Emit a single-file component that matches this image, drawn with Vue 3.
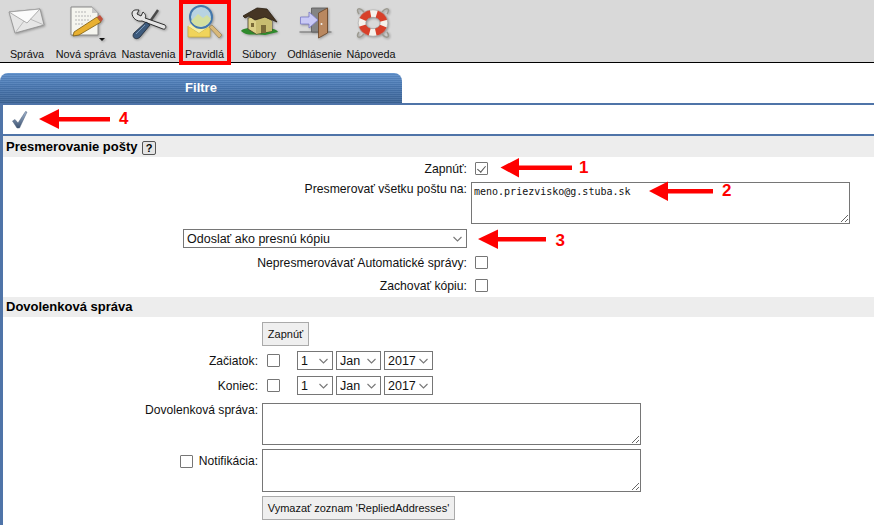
<script setup>
const tools = [
  { label: 'Správa', w: 54 },
  { label: 'Nová správa', w: 64 },
  { label: 'Nastavenia', w: 61 },
  { label: 'Pravidlá', w: 51 },
  { label: 'Súbory', w: 58 },
  { label: 'Odhlásenie', w: 53 },
  { label: 'Nápoveda', w: 60 },
]
</script>

<template>
  <div class="page">
    <div class="toolbar">
      <div v-for="(t, i) in tools" :key="t.label" class="tool" :style="{ width: t.w + 'px' }">
        <svg class="ic" viewBox="0 0 44 44" width="44" height="44">
          <g v-if="i === 0">
            <path d="M4 12 L35 9 L39 25 L10 33 Z" fill="#e6e6e6" stroke="#8c8c8c" stroke-width=".8"/>
            <path d="M4 12 L22 23 L35 9 Z" fill="#fbfbfb" stroke="#9a9a9a" stroke-width=".8"/>
            <path d="M10 33 L19 21 M39 25 L25 19" stroke="#b0b0b0" stroke-width=".8" fill="none"/>
          </g>
          <g v-else-if="i === 1">
            <path d="M7 7 H28 L34 13 V35 H7 Z" fill="#f5f5ef" stroke="#8a8a8a"/>
            <path d="M28 7 V13 H34 Z" fill="#c9c9c9"/>
            <path d="M11 12 H23 M11 16 H27 M11 20 H25 M11 24 H19" stroke="#b5b5b5" stroke-dasharray="2 1"/>
            <path d="M10 32 L33 17 L37 22 L15 35 L9 36 Z" fill="#e8b030" stroke="#7a5a10" stroke-width=".8"/>
            <path d="M33 17 L37 22 L39 19 L36 15 Z" fill="#c0503c"/>
            <path d="M35 38 H41 L38 41 Z" fill="#111"/>
          </g>
          <g v-else-if="i === 2">
            <path d="M22 23 L31 10" stroke="#4a4a4a" stroke-width="2.400"/>
            <path d="M5 13 C6 9 10 10 12 10 L10 14 L14 16 L16 12 C19 14 19 17 18 18 L38 25 C40 27 38 30 36 29 L15 21 C10 22 5 18 5 13 Z" fill="#e4e4e4" stroke="#2e2e2e" stroke-width="1"/>
            <path d="M7 33 L19 22 L23 25 L13 37 C9 41 4 37 7 33 Z" fill="#3d5a7c" stroke="#1c2634" stroke-width=".8"/>
            <path d="M9 34 L18 25" stroke="#7a98b8" stroke-width="1"/>
          </g>
          <g v-else-if="i === 3">
            <path d="M5 26 L16 33 L27 26 V37 H5 Z" fill="#f0d45a" stroke="#c8ac40" stroke-width=".8"/>
            <path d="M5 26 L16 19 L27 26 L16 33 Z" fill="#f7f0a0"/>
            <circle cx="18" cy="17" r="11" fill="#bcdcec" fill-opacity=".85" stroke="#4478ac" stroke-width="2"/>
            <path d="M8 21 L15 14 L20 18 L24 15 L28 19 A11 11 0 0 1 8 21 Z" fill="#d4e0a0"/>
            <path d="M26 27 L29 25 L39 35 L36 38 Z" fill="#d9b878" stroke="#9a8860" stroke-width=".8"/>
          </g>
          <g v-else-if="i === 4">
            <path d="M4 31 C7 26 38 26 41 32 L28 35 C20 33 10 37 4 31 Z" fill="#2f8a2c"/>
            <path d="M11 18 L24 15 L35 21 V31 L19 34 L11 29 Z" fill="#dcd088" stroke="#4a4028" stroke-width=".8"/>
            <path d="M19 20 L19 34 L35 31 V21 L24 15 Z" fill="#c8bc70"/>
            <path d="M6 16 L20 8 L30 9 L40 22 L28 17 L18 20 L12 16 L8 18 Z" fill="#463624" stroke="#281e12" stroke-width=".8"/>
            <rect x="24" y="25" width="5" height="8" fill="#7a6a38"/>
            <rect x="14" y="23" width="3" height="4" fill="#7a6a38"/>
          </g>
          <g v-else-if="i === 5">
            <path d="M6.500 32 H38.500" stroke="#666"/>
            <path d="M18.500 8 H34.500 V32 H18.500 Z" fill="#848484" stroke="#5a5a5a" stroke-width=".8"/>
            <path d="M25.500 13 L34.500 8 V33 L25.500 38 Z" fill="#b98860" stroke="#6a4426" stroke-width=".8"/>
            <circle cx="28.500" cy="24" r="1" fill="#f0f0f0"/>
            <path d="M7.500 17 H16 V12 L25 20 L16 28 V24 H7.500 Z" fill="#c9c9f5" stroke="#7a7ac8" stroke-width=".8"/>
          </g>
          <g v-else>
            <path d="M10 14 C6 8 11 7 15 12 M38 14 C42 8 37 7 33 12 M10 32 C6 38 11 39 15 34 M38 32 C42 38 37 39 33 34" stroke="#9c9a90" stroke-width="1.500" fill="none"/>
            <ellipse cx="24" cy="23" rx="11" ry="9.500" fill="none" stroke="#f5f2ec" stroke-width="7.500"/>
            <ellipse cx="24" cy="23" rx="11" ry="9.500" fill="none" stroke="#d8402a" stroke-width="7.500" stroke-dasharray="10 6.200" stroke-dashoffset="-3.200"/>
            <ellipse cx="24" cy="23" rx="14.800" ry="13.200" fill="none" stroke="#9a9a9a" stroke-width=".5"/>
            <ellipse cx="24" cy="23" rx="7.200" ry="5.700" fill="none" stroke="#888" stroke-width=".5"/>
          </g>
        </svg>
        <span class="lbl">{{ t.label }}</span>
      </div>
      <div class="marker"></div>
    </div>

    <div class="tabs"><div class="tab">Filtre</div></div>

    <div class="panel">
      <div class="savebar">
        <svg class="check" viewBox="0 0 16 18" width="16" height="18">
          <defs>
            <linearGradient id="chk" x1="0" y1="0" x2="0" y2="1">
              <stop offset="0" stop-color="#a4b8d2" />
              <stop offset="1" stop-color="#3c5270" />
            </linearGradient>
          </defs>
          <path d="M.5 10 L3 8.500 L6 12 L13.500 .5 L15 1 L7.500 17 L5 17 Z" fill="url(#chk)" stroke="#4a5e7a" stroke-width=".5"/>
        </svg>
      </div>

      <div class="sec">Presmerovanie pošty <span class="help">?</span></div>

      <div class="row r1">
        <label class="lab">Zapnúť:</label>
        <input type="checkbox" checked class="cb" />
      </div>
      <div class="row r2">
        <label class="lab">Presmerovať všetku poštu na:</label>
        <textarea class="ta mono" spellcheck="false">meno.priezvisko@g.stuba.sk</textarea>
      </div>
      <div class="row r3">
        <select class="wide"><option>Odoslať ako presnú kópiu</option></select>
      </div>
      <div class="row r1">
        <label class="lab">Nepresmerovávať Automatické správy:</label>
        <input type="checkbox" class="cb" />
      </div>
      <div class="row r1">
        <label class="lab">Zachovať kópiu:</label>
        <input type="checkbox" class="cb" />
      </div>

      <div class="sec sec2">Dovolenková správa</div>

      <div class="vac">
        <div class="f-row first">
          <button class="btn b-on">Zapnúť</button>
        </div>
        <div class="d-row">
          <span class="v-lab">Začiatok:</span>
          <span class="chk-cell"><input type="checkbox" class="cb" /></span>
          <div class="dates">
            <select class="d"><option>1</option></select>
            <select class="m"><option>Jan</option></select>
            <select class="y"><option>2017</option></select>
          </div>
        </div>
        <div class="d-row second">
          <span class="v-lab">Koniec:</span>
          <span class="chk-cell"><input type="checkbox" class="cb" /></span>
          <div class="dates">
            <select class="d"><option>1</option></select>
            <select class="m"><option>Jan</option></select>
            <select class="y"><option>2017</option></select>
          </div>
        </div>
        <div class="t-row one">
          <span class="v-lab">Dovolenková správa:</span>
          <textarea class="ta2"></textarea>
        </div>
        <div class="t-row two">
          <span class="v-lab"><input type="checkbox" class="cb n-cb" />Notifikácia:</span>
          <textarea class="ta2 tall"></textarea>
        </div>
        <div class="f-row">
          <button class="btn b-clr">Vymazať zoznam 'RepliedAddresses'</button>
        </div>
      </div>
    </div>

    <!-- annotations drawn over the screenshot -->
    <svg class="ann" width="874" height="525" viewBox="0 0 874 525">
      <g fill="#f00">
        <path d="M39 119 L59 109 V117 H110 V121.500 H59 V129 Z"/>
        <path d="M500.500 167.500 L519 158 V165.500 L572 165.500 V170 L519 170 V177.500 Z"/>
        <path d="M649 191 L668 181.500 V189 L713 189 V193.500 L668 193.500 V201 Z"/>
        <path d="M478 239 L498 229.500 V237 L546 237 V241.500 L498 241.500 V249 Z"/>
      </g>
      <g fill="#f00" font-family="Liberation Sans, sans-serif" font-size="17" font-weight="700">
        <text x="119" y="124">4</text>
        <text x="579" y="173">1</text>
        <text x="722" y="196">2</text>
        <text x="555.500" y="245.500">3</text>
      </g>
    </svg>
  </div>
</template>

<style>
html, body { margin: 0; background: #fff; }
</style>

<style scoped>
.page {
  position: relative;
  width: 874px;
  height: 525px;
  overflow: hidden;
  background: #fff;
  font-family: "Liberation Sans", Arial, sans-serif;
  font-size: 12px;
  color: #111;
}
.toolbar {
  position: relative;
  display: flex;
  height: 62px;
  background: #d9d9d9;
  border-bottom: 1px solid #000;
}
.tool {
  position: relative;
  display: flex;
  flex-direction: column;
  align-items: center;
  height: 62px;
  flex: none;
}
.ic { filter: drop-shadow(1px 1px 1px rgba(0, 0, 0, .3)); }
.lbl {
  position: absolute;
  top: 48px;
  white-space: nowrap;
  font-size: 10.8px;
  line-height: 13px;
  left: 50%;
  transform: translateX(-50%);
}
.marker {
  position: absolute;
  left: 179px;
  top: 0;
  width: 52px;
  height: 65px;
  box-sizing: border-box;
  border: 4px solid #f00;
}
.tabs {
  height: 30px;
  padding-top: 10px;
}
.tab {
  width: 402px;
  height: 30px;
  box-sizing: border-box;
  border-radius: 8px 8px 0 0;
  background:
    repeating-linear-gradient(180deg, rgba(255, 255, 255, .07) 0 1px, rgba(0, 0, 0, .05) 1px 2px),
    linear-gradient(180deg, #5e90cc 0%, #4a78b2 45%, #3c6496 100%);
  color: #fff;
  font-weight: 700;
  font-size: 13px;
  line-height: 30px;
  text-align: center;
}
.panel {
  border-left: 3px solid #4f74a8;
  border-top: 2px solid #4f74a8;
  height: 422px;
  box-sizing: border-box;
}
.savebar {
  height: 29px;
  display: flex;
  align-items: center;
  padding-left: 9px;
  border-bottom: 2px solid #4f74a8;
}
.sec {
  height: 21px;
  line-height: 21px;
  background: #ededed;
  font-weight: 700;
  font-size: 13px;
  padding-left: 3px;
  color: #000;
}
.sec2 { height: 20px; line-height: 20px; }
.help {
  display: inline-block;
  width: 14px;
  height: 14px;
  box-sizing: border-box;
  border: 1px solid #555;
  border-radius: 2px;
  background: #e4e4e4;
  font-size: 11px;
  line-height: 12px;
  text-align: center;
  vertical-align: -1px;
  margin-left: 1px;
}
.row { display: flex; }
.lab {
  width: 464px;
  text-align: right;
  font-size: 12.2px;
  line-height: 14px;
  flex: none;
}
.r1 { height: 23px; align-items: center; }
.r1 .cb { margin: 0 0 0 8px; }
.r2 { height: 47px; margin-top: 2px; }
.cb {
  appearance: none;
  display: block;
  width: 13px;
  height: 13px;
  box-sizing: border-box;
  border: 1px solid #767676;
  border-radius: 1px;
  background: #fff;
  position: relative;
  margin: 0;
}
.cb:checked::after {
  content: "";
  position: absolute;
  left: 3px;
  top: 1px;
  width: 4px;
  height: 7px;
  border: solid #555;
  border-width: 0 1px 1px 0;
  transform: rotate(40deg);
}
.ta {
  display: block;
  margin: 0 0 0 4px;
  width: 379px;
  height: 42px;
  box-sizing: border-box;
  border: 1px solid #767676;
  padding: 3px 2px;
  resize: both;
  font-family: "DejaVu Sans Mono", monospace;
  font-size: 10px;
  line-height: 12px;
  color: #111;
  outline: none;
}
.r3 { height: 22px; align-items: flex-start; }
select {
  appearance: none;
  box-sizing: border-box;
  background-color: #fff;
  border: 1px solid #767676;
  border-radius: 0;
  font-family: "Liberation Sans", Arial, sans-serif;
  font-size: 12.5px;
  color: #111;
  background-image: url("data:image/svg+xml,%3Csvg xmlns='http://www.w3.org/2000/svg' width='9' height='6'%3E%3Cpath d='M.5 1l4 4 4-4' fill='none' stroke='%23777' stroke-width='1.100'/%3E%3C/svg%3E");
  background-repeat: no-repeat;
}
.wide {
  display: block;
  margin-left: 180px;
  width: 284px;
  height: 19px;
  padding: 0 0 0 3px;
  background-position: right 4px center;
}
.vac { display: flex; flex-direction: column; }
.f-row { padding-left: 259px; }
.first { padding-top: 5px; }
.d-row {
  display: flex;
  align-items: center;
  height: 19px;
  margin-top: 5px;
}
.second { margin-top: 6px; }
.v-lab {
  flex: none;
  width: 255px;
  display: flex;
  justify-content: flex-end;
  text-align: right;
  font-size: 12.1px;
  line-height: 14px;
  white-space: nowrap;
}
.chk-cell { width: 39px; flex: none; padding-left: 9px; box-sizing: border-box; }
.dates { display: flex; gap: 3px; }
.d, .m, .y {
  display: block;
  height: 19px;
  padding: 0 0 0 3px;
  background-position: right 4px center;
}
.d { width: 36px; }
.m { width: 45px; }
.y { width: 49px; }
.t-row { display: flex; align-items: flex-start; }
.one { margin-top: 8px; }
.two { margin-top: 4px; }
.two .v-lab { padding-top: 5px; align-items: center; }
.n-cb { margin: 0 6px 0 0; }
.ta2 {
  display: block;
  width: 379px;
  height: 42px;
  margin: 0 0 0 4px;
  box-sizing: border-box;
  border: 1px solid #767676;
  resize: both;
  outline: none;
  padding: 2px;
}
.tall { height: 43px; }
.btn {
  display: block;
  font-family: "Liberation Sans", Arial, sans-serif;
  font-size: 11px;
  padding: 0;
  background: #efefef;
  border: 1px solid #aaa;
  border-radius: 0;
  color: #111;
  box-sizing: border-box;
}
.b-on { width: 47px; height: 24px; }
.b-clr { width: 193px; height: 24px; margin-top: 4px; }
.ann { position: absolute; left: 0; top: 0; pointer-events: none; }
</style>
